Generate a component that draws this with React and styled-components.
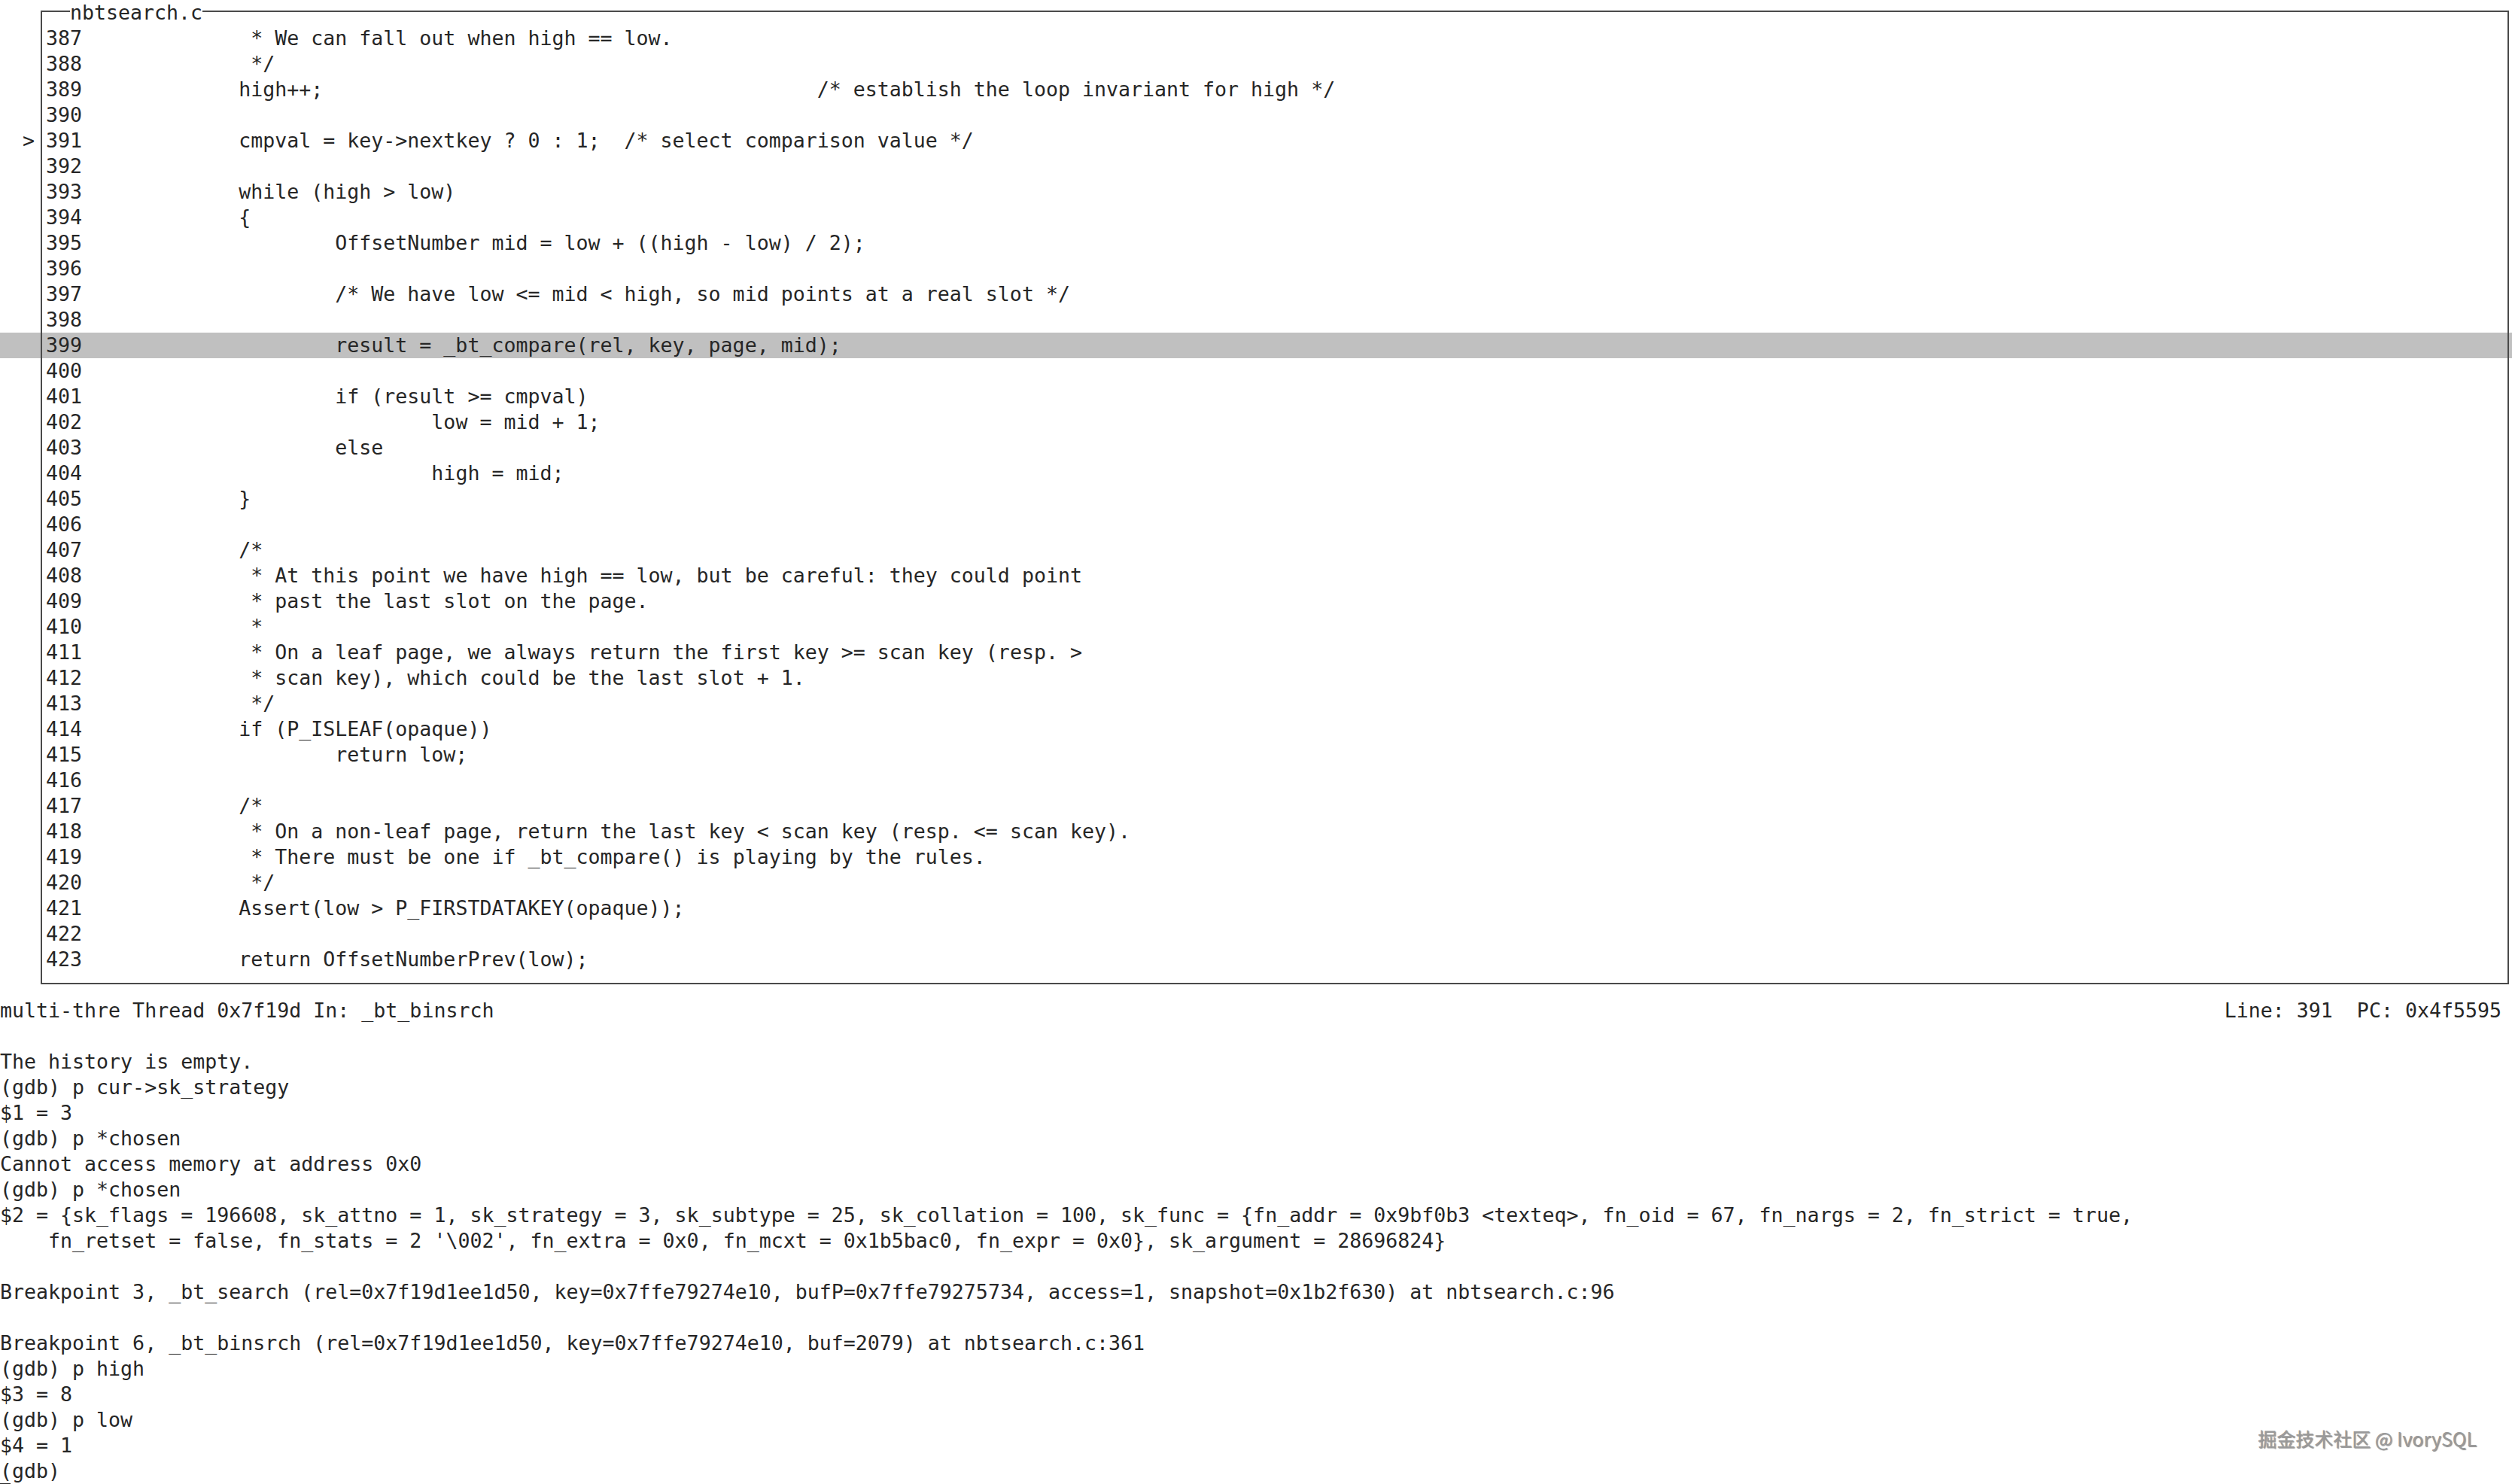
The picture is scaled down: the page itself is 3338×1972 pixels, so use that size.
import React from "react";
import styled, { createGlobalStyle } from "styled-components";

const Global = createGlobalStyle`
  html, body { margin: 0; padding: 0; background: #ffffff; }
  body { overflow: hidden; }
  #root { width: 3338px; height: 1972px; }
`;

const ROW = 34;
const INK = "#262626";
const RULE = "#4a4a4a";

const Screen = styled.div`
  position: relative;
  width: 3338px;
  height: 1972px;
  background: #ffffff;
  color: ${INK};
  font-family: "DejaVu Sans Mono", "Liberation Mono", monospace;
  font-size: 26.6px;
  line-height: ${ROW}px;
  display: flex;
  flex-direction: column;
  overflow: hidden;
`;

const SourceWindow = styled.section`
  display: flex;
  flex-direction: column;
`;

const TopRule = styled.div`
  display: flex;
  height: ${ROW}px;
  padding-left: 54px;
  padding-right: 4px;
`;

const RuleCorner = styled.div`
  width: 37px;
  margin-top: 14px;
  border-top: 2px solid ${RULE};
  border-left: 2px solid ${RULE};
`;

const RuleTail = styled.div`
  flex: 1;
  margin-top: 14px;
  border-top: 2px solid ${RULE};
  border-right: 2px solid ${RULE};
`;

const Title = styled.span`
  white-space: pre;
`;

const SrcRow = styled.div`
  display: flex;
  height: ${ROW}px;
  background: ${(p) => (p.$current ? "#c0c0c0" : "transparent")};
`;

const Marker = styled.span`
  width: 54px;
  flex: none;
  white-space: pre;
  box-sizing: border-box;
  padding-left: 30px;
`;

const Code = styled.pre`
  flex: 1;
  margin: 0 4px 0 0;
  padding-left: 5px;
  border-left: 2px solid ${RULE};
  border-right: 2px solid ${RULE};
  font: inherit;
  white-space: pre;
  tab-size: 8;
  -moz-tab-size: 8;
  overflow: hidden;
`;

const BottomRule = styled.div`
  height: ${ROW}px;
  padding-left: 54px;
  padding-right: 4px;
  display: flex;
`;

const BottomBox = styled.div`
  flex: 1;
  height: 14px;
  border-left: 2px solid ${RULE};
  border-right: 2px solid ${RULE};
  border-bottom: 2px solid ${RULE};
`;

const StatusBar = styled.div`
  display: flex;
  justify-content: space-between;
  height: ${ROW}px;
  padding-right: 14px;
  white-space: pre;
`;

const CommandWindow = styled.section`
  flex: 1;
  display: flex;
  flex-direction: column;
`;

const CmdLine = styled.div`
  height: ${ROW}px;
  white-space: pre;
`;

const Cursor = styled.span`
  position: relative;
  &::after {
    content: "";
    position: absolute;
    left: 0;
    bottom: -4px;
    width: 14px;
    height: 3px;
    background: ${INK};
  }
`;

const Watermark = styled.div`
  position: absolute;
  right: 47px;
  bottom: 44px;
  font-family: "Noto Sans CJK SC", "Noto Sans", sans-serif;
  font-size: 25px;
  line-height: 34px;
  color: #9a9a9a;
  text-shadow: 1px 1px 1px rgba(0, 0, 0, 0.45), -1px -1px 0 #ffffff;
  white-space: pre;
`;

const source = [
  [387, "\t\t * We can fall out when high == low."],
  [388, "\t\t */"],
  [389, "\t\thigh++;\t\t\t\t\t\t/* establish the loop invariant for high */"],
  [390, ""],
  [391, "\t\tcmpval = key->nextkey ? 0 : 1;\t/* select comparison value */"],
  [392, ""],
  [393, "\t\twhile (high > low)"],
  [394, "\t\t{"],
  [395, "\t\t\tOffsetNumber mid = low + ((high - low) / 2);"],
  [396, ""],
  [397, "\t\t\t/* We have low <= mid < high, so mid points at a real slot */"],
  [398, ""],
  [399, "\t\t\tresult = _bt_compare(rel, key, page, mid);"],
  [400, ""],
  [401, "\t\t\tif (result >= cmpval)"],
  [402, "\t\t\t\tlow = mid + 1;"],
  [403, "\t\t\telse"],
  [404, "\t\t\t\thigh = mid;"],
  [405, "\t\t}"],
  [406, ""],
  [407, "\t\t/*"],
  [408, "\t\t * At this point we have high == low, but be careful: they could point"],
  [409, "\t\t * past the last slot on the page."],
  [410, "\t\t *"],
  [411, "\t\t * On a leaf page, we always return the first key >= scan key (resp. >"],
  [412, "\t\t * scan key), which could be the last slot + 1."],
  [413, "\t\t */"],
  [414, "\t\tif (P_ISLEAF(opaque))"],
  [415, "\t\t\treturn low;"],
  [416, ""],
  [417, "\t\t/*"],
  [418, "\t\t * On a non-leaf page, return the last key < scan key (resp. <= scan key)."],
  [419, "\t\t * There must be one if _bt_compare() is playing by the rules."],
  [420, "\t\t */"],
  [421, "\t\tAssert(low > P_FIRSTDATAKEY(opaque));"],
  [422, ""],
  [423, "\t\treturn OffsetNumberPrev(low);"],
];

const commands = [
  "",
  "The history is empty.",
  "(gdb) p cur->sk_strategy",
  "$1 = 3",
  "(gdb) p *chosen",
  "Cannot access memory at address 0x0",
  "(gdb) p *chosen",
  "$2 = {sk_flags = 196608, sk_attno = 1, sk_strategy = 3, sk_subtype = 25, sk_collation = 100, sk_func = {fn_addr = 0x9bf0b3 <texteq>, fn_oid = 67, fn_nargs = 2, fn_strict = true,",
  "    fn_retset = false, fn_stats = 2 '\\002', fn_extra = 0x0, fn_mcxt = 0x1b5bac0, fn_expr = 0x0}, sk_argument = 28696824}",
  "",
  "Breakpoint 3, _bt_search (rel=0x7f19d1ee1d50, key=0x7ffe79274e10, bufP=0x7ffe79275734, access=1, snapshot=0x1b2f630) at nbtsearch.c:96",
  "",
  "Breakpoint 6, _bt_binsrch (rel=0x7f19d1ee1d50, key=0x7ffe79274e10, buf=2079) at nbtsearch.c:361",
  "(gdb) p high",
  "$3 = 8",
  "(gdb) p low",
  "$4 = 1",
];

const PC_LINE = 391;
const CURRENT_LINE = 399;

export default function App() {
  return (
    <>
      <Global />
      <Screen>
        <SourceWindow>
          <TopRule>
            <RuleCorner />
            <Title>nbtsearch.c</Title>
            <RuleTail />
          </TopRule>
          {source.map(([num, text]) => (
            <SrcRow key={num} $current={num === CURRENT_LINE}>
              <Marker>{num === PC_LINE ? ">" : ""}</Marker>
              <Code>{`${num}${text}`}</Code>
            </SrcRow>
          ))}
          <BottomRule>
            <BottomBox />
          </BottomRule>
        </SourceWindow>
        <StatusBar>
          <span>multi-thre Thread 0x7f19d In: _bt_binsrch</span>
          <span>Line: 391  PC: 0x4f5595</span>
        </StatusBar>
        <CommandWindow>
          {commands.map((line, i) => (
            <CmdLine key={i}>{line}</CmdLine>
          ))}
          <CmdLine>
            <Cursor>(</Cursor>gdb)
          </CmdLine>
        </CommandWindow>
        <Watermark>掘金技术社区 @ IvorySQL</Watermark>
      </Screen>
    </>
  );
}
